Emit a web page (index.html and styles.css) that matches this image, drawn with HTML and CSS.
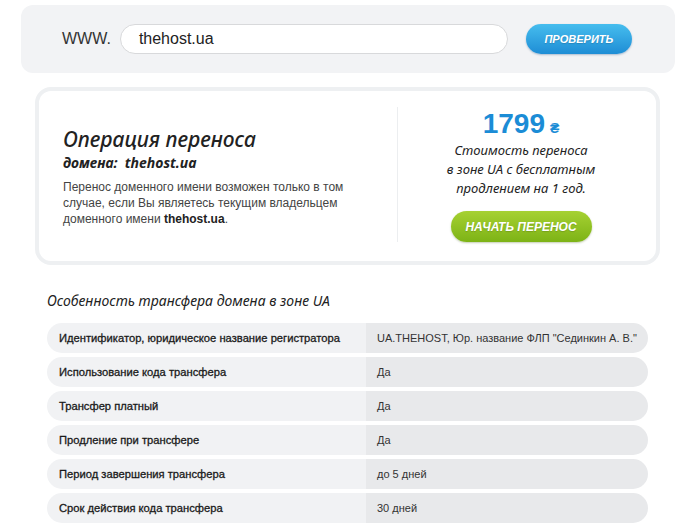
FILE: index.html
```html
<!DOCTYPE html>
<html lang="ru">
<head>
<meta charset="utf-8">
<title>Перенос домена</title>
<link rel="stylesheet" href="styles.css">
</head>
<body>
<div class="search">
  <span class="www">WWW.</span>
  <div class="input">thehost.ua</div>
  <div class="btn-check">ПРОВЕРИТЬ</div>
</div>

<div class="transfer">
  <div class="left">
    <div class="title">Операция переноса</div>
    <div class="subtitle">домена:&nbsp; thehost.ua</div>
    <p class="desc">Перенос доменного имени возможен только в том случае, если Вы являетесь текущим владельцем доменного имени <b>thehost.ua</b>.</p>
  </div>
  <div class="right">
    <div class="price">1799<span class="cur">₴</span></div>
    <div class="price-desc">Стоимость переноса<br>в зоне UA с бесплатным<br>продлением на 1 год.</div>
    <div class="btn-start">НАЧАТЬ ПЕРЕНОС</div>
  </div>
</div>

<h2 class="section-title">Особенность трансфера домена в зоне UA</h2>
<div class="table">
  <div class="row"><div class="key">Идентификатор, юридическое название регистратора</div><div class="val">UA.THEHOST, Юр. название ФЛП "Сединкин А. В."</div></div>
  <div class="row"><div class="key">Использование кода трансфера</div><div class="val">Да</div></div>
  <div class="row"><div class="key">Трансфер платный</div><div class="val">Да</div></div>
  <div class="row"><div class="key">Продление при трансфере</div><div class="val">Да</div></div>
  <div class="row"><div class="key">Период завершения трансфера</div><div class="val">до 5 дней</div></div>
  <div class="row"><div class="key">Срок действия кода трансфера</div><div class="val">30 дней</div></div>
</div>
</body>
</html>
```

FILE: styles.css
```css
html, body {
  margin: 0;
  padding: 0;
  background: #fff;
}
body {
  font-family: "Liberation Sans", Arial, sans-serif;
  color: #222;
  overflow: hidden;
}

.search {
  margin: 5px 0 0 21px;
  width: 654px;
  height: 68px;
  box-sizing: border-box;
  background: #f2f3f5;
  border-radius: 12px;
  display: flex;
  align-items: center;
  padding-left: 41px;
}
.www {
  font-size: 16px;
  color: #333;
  margin-right: 9px;
}
.input {
  width: 388px;
  height: 30px;
  box-sizing: border-box;
  border: 1px solid #d8d9db;
  border-radius: 15px;
  background: #fff;
  padding-left: 18px;
  font-size: 16px;
  color: #222;
  display: flex;
  align-items: center;
}
.btn-check {
  margin-left: 18px;
  width: 106px;
  height: 30px;
  border-radius: 15px;
  background: linear-gradient(#46bdee, #1e8dd5);
  box-shadow: 0 1px 2px rgba(0, 60, 120, 0.3);
  color: #fff;
  font-size: 11px;
  font-weight: bold;
  font-style: italic;
  display: flex;
  align-items: center;
  justify-content: center;
  text-shadow: 0 1px 1px rgba(0, 0, 0, 0.15);
}

.transfer {
  margin: 14px 0 0 35px;
  width: 625px;
  height: 178px;
  box-sizing: border-box;
  border: 4px solid #eef0f2;
  border-radius: 16px;
  display: flex;
  align-items: center;
}
.left {
  width: 358px;
  box-sizing: border-box;
  padding: 2px 0 0 24px;
}
.title {
  font-family: "Noto Sans", sans-serif;
  font-style: italic;
  font-weight: 500;
  font-size: 21px;
  line-height: 24px;
  color: #222;
}
.subtitle {
  font-family: "Noto Sans", sans-serif;
  font-style: italic;
  font-weight: bold;
  font-size: 14px;
  line-height: 20px;
  color: #222;
  margin-top: 2px;
}
.desc {
  margin: 6px 0 0;
  font-size: 12px;
  line-height: 16px;
  color: #444;
  width: 300px;
}
.desc b {
  color: #222;
}
.right {
  align-self: stretch;
  margin: 16px 0 19px;
  width: 246px;
  border-left: 1px solid #eceef0;
  display: flex;
  flex-direction: column;
  align-items: center;
}
.price {
  font-size: 28px;
  line-height: 30px;
  font-weight: bold;
  color: #1b8cd6;
  margin-top: 2px;
}
.cur {
  font-size: 14px;
  margin-left: 5px;
}
.price-desc {
  margin-top: -2px;
  font-family: "Noto Sans", sans-serif;
  font-style: italic;
  font-size: 13px;
  line-height: 19px;
  color: #222;
  text-align: center;
}
.btn-start {
  margin-top: 13px;
  width: 141px;
  height: 31px;
  border-radius: 16px;
  background: linear-gradient(#a6d132, #7db316);
  box-shadow: 0 1px 2px rgba(60, 90, 0, 0.3);
  color: #fff;
  font-size: 12px;
  font-weight: bold;
  font-style: italic;
  display: flex;
  align-items: center;
  justify-content: center;
  text-shadow: 0 1px 1px rgba(0, 0, 0, 0.15);
}

.section-title {
  margin: 26px 0 0 47px;
  font-family: "Noto Sans", sans-serif;
  font-style: italic;
  font-weight: normal;
  font-size: 14px;
  line-height: 20px;
  color: #222;
}
.table {
  margin: 12px 0 0 47px;
  width: 601px;
  display: flex;
  flex-direction: column;
  gap: 4px;
}
.row {
  display: grid;
  grid-template-columns: 319px 1fr;
  height: 30px;
  border-radius: 15px;
  overflow: hidden;
}
.key {
  background: #f1f2f4;
  padding-left: 12px;
  display: flex;
  align-items: center;
  font-size: 11.2px;
  color: #1a1a1a;
  -webkit-text-stroke: 0.3px #1a1a1a;
  white-space: nowrap;
}
.val {
  background: #e8e9eb;
  padding-left: 11px;
  display: flex;
  align-items: center;
  font-size: 11px;
  color: #333;
  white-space: nowrap;
}
```
